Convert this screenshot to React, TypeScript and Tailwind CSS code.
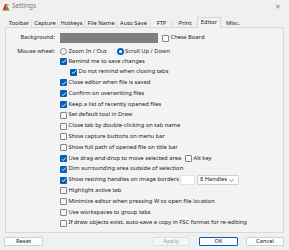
import React from "react";

const Check = ({ checked }: { checked: boolean }) =>
  checked ? (
    <div className="w-[7px] h-[7px] rounded-[1px] bg-[#005fb8] flex items-center justify-center shrink-0">
      <svg width="6" height="6" viewBox="0 0 6 6">
        <path d="M1 3.2 L2.4 4.5 L5 1.5" stroke="white" strokeWidth="0.9" fill="none" />
      </svg>
    </div>
  ) : (
    <div className="w-[7px] h-[7px] rounded-[1px] border border-[#858585] bg-[#f7f7f7] shrink-0" />
  );

const Row = ({ checked, label, indent = false, children }: { checked: boolean; label: string; indent?: boolean; children?: React.ReactNode }) => (
  <div className={`h-[10.8px] flex items-center ${indent ? "pl-[64px]" : "pl-[54px]"}`}>
    <Check checked={checked} />
    <span className="ml-[1.5px] whitespace-nowrap">{label}</span>
    {children}
  </div>
);

const tabs = ["Toolbar", "Capture", "Hotkeys", "File Name", "Auto Save", "FTP", "Print", "Editor", "Misc."];
const tabX = [6, 32, 58, 85, 117, 150, 173, 197, 221, 245];

export default function App() {
  return (
    <div
      className="w-[289px] h-[250px] bg-[#f0f0f0] relative overflow-hidden text-[#1b1b1b] text-[5.8px] leading-none"
      style={{ fontFamily: '"Noto Sans", "Open Sans", sans-serif' }}
    >
      {/* Title bar */}
      <div className="h-[13px] flex items-center">
        <svg className="ml-[2px]" width="8" height="8" viewBox="0 0 8 8">
          <path d="M0.5 7.5 L3 1 L5 1 L3.5 7.5 Z" fill="#d8322a" />
          <path d="M3.5 7.5 L5 2.5 L7.5 7.5 Z" fill="#3a9b3a" />
          <path d="M4.5 1 L7 1 L6 3.5 Z" fill="#e9a23b" />
        </svg>
        <span className="ml-[2px] text-[#7a7a7a] text-[6.3px]">Settings</span>
        <span className="ml-auto mr-[8px] text-[#8a8a8a] text-[7px]">✕</span>
      </div>
      {/* Tabs */}
      <div className="relative h-[14px]">
        {tabs.map((t, i) => (
          <div
            key={t}
            className={`absolute flex items-center justify-center whitespace-nowrap ${
              t === "Editor"
                ? "top-[4px] h-[11px] border border-b-0 border-[#d5d5d5] bg-[#f3f3f3] z-10"
                : "top-[6px] h-[9px]"
            }`}
            style={{ left: tabX[i], width: tabX[i + 1] - tabX[i] }}
          >
            {t}
            {t !== "Editor" && i < tabs.length - 1 && tabs[i + 1] !== "Editor" && (
              <div className="absolute right-0 top-[1px] h-[7px] w-px bg-[#dcdcdc]" />
            )}
          </div>
        ))}
      </div>
      {/* Panel */}
      <div className="mx-[5px] h-[206px] border border-[#d9d9d9] bg-[#f3f3f3] pt-[5px]">
        <div className="h-[10px] flex items-center">
          <div className="w-[49px] text-right">Background:</div>
          <div className="ml-[5px] w-[98px] h-[10px] bg-[#7f7f7f]" />
          <div className="ml-[4px] flex items-center">
            <Check checked={false} />
            <span className="ml-[1.5px]">Chess Board</span>
          </div>
        </div>
        <div className="h-[9px] mt-[4px] flex items-center">
          <div className="w-[49px] text-right">Mouse wheel:</div>
          <div className="ml-[5px] w-[7px] h-[7px] rounded-full border border-[#858585] bg-[#f7f7f7]" />
          <span className="ml-[1.5px] w-[48px]">Zoom In / Out</span>
          <div className="w-[7px] h-[7px] rounded-full bg-[#005fb8] flex items-center justify-center">
            <div className="w-[3px] h-[3px] rounded-full bg-white" />
          </div>
          <span className="ml-[1.5px]">Scroll Up / Down</span>
        </div>
        <Row checked label="Remind me to save changes" />
        <Row checked indent label="Do not remind when closing tabs" />
        <Row checked label="Close editor when file is saved" />
        <Row checked label="Confirm on overwriting files" />
        <Row checked label="Keep a list of recently opened files" />
        <Row checked={false} label="Set default tool in Draw" />
        <Row checked={false} label="Close tab by double-clicking on tab name" />
        <Row checked={false} label="Show capture buttons on menu bar" />
        <Row checked={false} label="Show full path of opened file on title bar" />
        <Row checked label="Use drag-and-drop to move selected area">
          <div className="absolute left-[185px] flex items-center">
            <Check checked={false} />
            <span className="ml-[1.5px]">Alt key</span>
          </div>
        </Row>
        <Row checked label="Dim surrounding area outside of selection" />
        <Row checked label="Show resizing handles on image borders">
          <div className="absolute left-[180px] w-[15px] h-[10px] bg-white border border-[#e3e3e3]" />
          <div className="absolute left-[197px] w-[42px] h-[10px] bg-[#fbfbfb] border border-[#d0d0d0] rounded-[1px] flex items-center pl-[2px]">
            8 Handles
            <svg className="absolute right-[4px]" width="5" height="3" viewBox="0 0 5 3">
              <path d="M0.5 0.5 L2.5 2.5 L4.5 0.5" stroke="#555" strokeWidth="0.7" fill="none" />
            </svg>
          </div>
        </Row>
        <Row checked={false} label="Highlight active tab" />
        <Row checked={false} label="Minimize editor when pressing W to open file location" />
        <Row checked={false} label="Use workspaces to group tabs" />
        <Row checked={false} label="If draw objects exist, auto-save a copy in FSC format for re-editing" />
      </div>
      {/* Buttons */}
      <div className="relative h-[17px]">
        <div className="absolute left-[4px] top-[4px] w-[39px] h-[9px] bg-[#fdfdfd] border border-[#d0d0d0] rounded-[1px] flex items-center justify-center">Reset</div>
        <div className="absolute left-[153px] top-[4px] w-[36px] h-[9px] bg-[#f5f5f5] border border-[#e0e0e0] rounded-[1px] flex items-center justify-center text-[#a0a0a0]">Apply</div>
        <div className="absolute left-[199px] top-[4px] w-[39px] h-[9px] bg-[#fdfdfd] border border-[#005fb8] rounded-[1px] flex items-center justify-center">OK</div>
        <div className="absolute left-[246px] top-[4px] w-[38px] h-[9px] bg-[#fdfdfd] border border-[#d0d0d0] rounded-[1px] flex items-center justify-center">Cancel</div>
      </div>
    </div>
  );
}
